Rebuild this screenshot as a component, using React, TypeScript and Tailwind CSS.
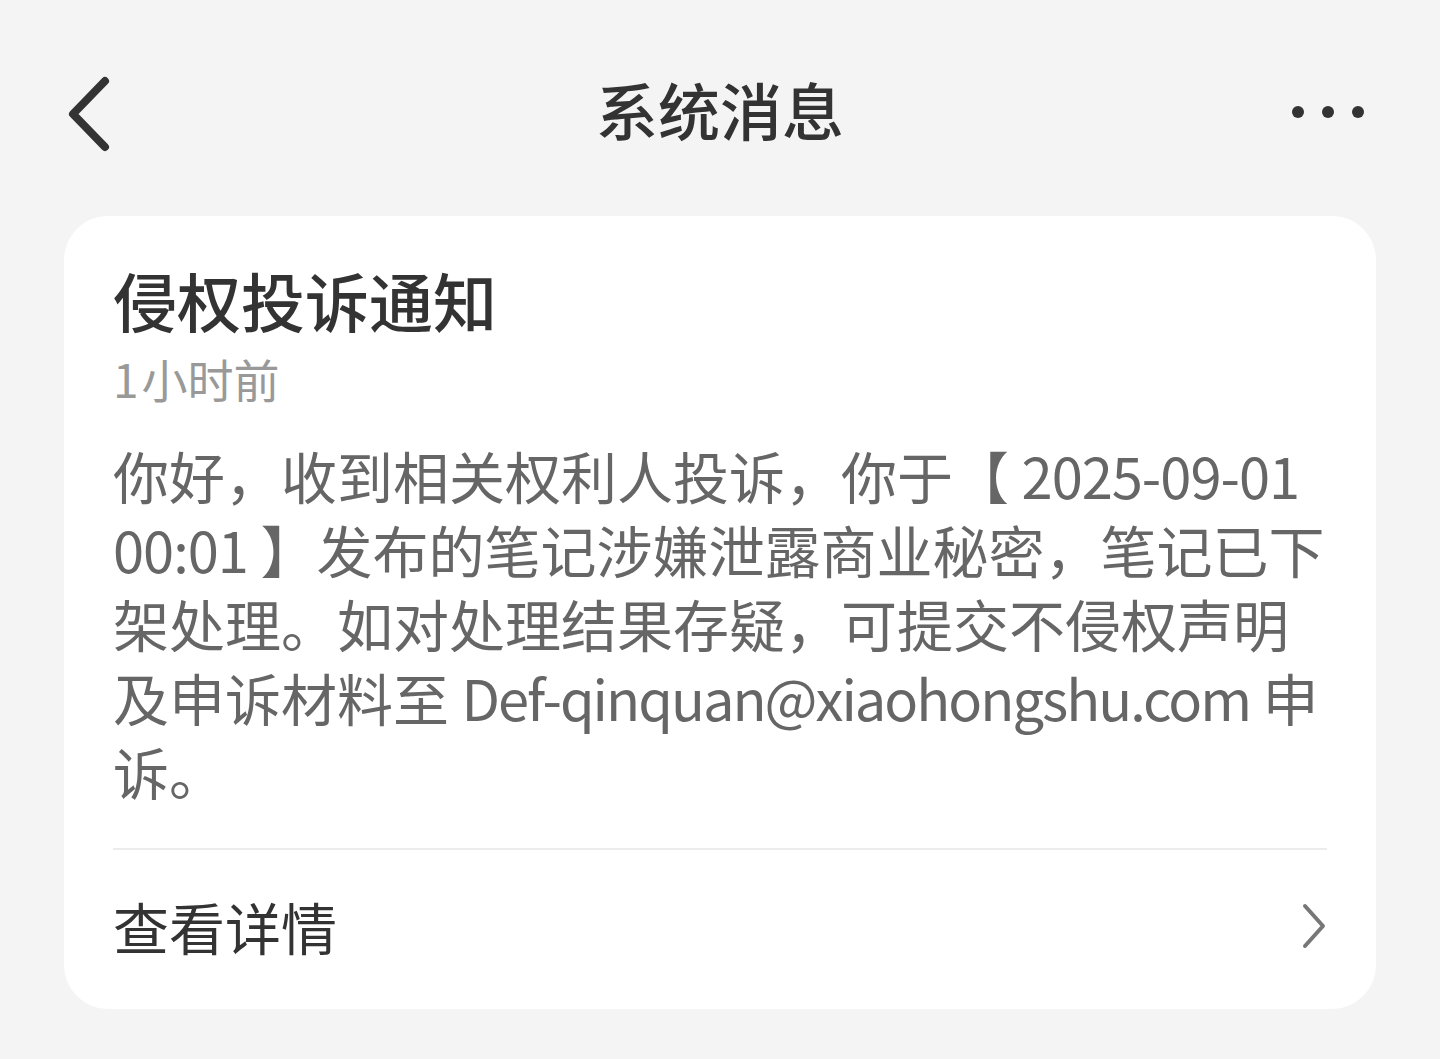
import React from "react";

const FONT = { fontFamily: '"Noto Sans CJK SC", "Noto Sans", sans-serif' };

function BackIcon() {
  return (
    <svg width="48" height="80" viewBox="0 0 48 80" fill="none">
      <path
        d="M41 9 L9 42 L41 75"
        stroke="#333333"
        strokeWidth="8"
        strokeLinecap="round"
        strokeLinejoin="round"
      />
    </svg>
  );
}

function ChevronRight() {
  return (
    <svg width="26" height="50" viewBox="0 0 26 50" fill="none">
      <path
        d="M4 5 L22 25 L4 45"
        stroke="#777777"
        strokeWidth="4"
        strokeLinecap="round"
        strokeLinejoin="round"
      />
    </svg>
  );
}

// body lines are kept as in the app's wrapping
const LINES: React.ReactNode[] = [
  <>
    你好，收到相关权利人投诉，你于【 <span className="tracking-[-1px]">2025-09-01</span>
  </>,
  <>
    <span className="tracking-[-1px]">00:01</span> 】发布的笔记涉嫌泄露商业秘密，笔记已下
  </>,
  <>架处理。如对处理结果存疑，可提交不侵权声明</>,
  <>
    及申诉材料至 <span className="tracking-[-2px]">Def-qinquan@xiaohongshu.com</span> 申
  </>,
  <>诉。</>,
];

export default function App() {
  return (
    <div className="min-h-[1059px] w-[1440px] bg-[#f4f4f4]" style={FONT}>
      {/* Header */}
      <header className="flex h-[216px] items-center px-[64px] pt-[2px]">
        <div className="mt-[6px] flex w-[100px] items-center">
          <BackIcon />
        </div>
        <h1 className="flex-1 text-center text-[62px] font-medium leading-none text-[#333333]">
          系统消息
        </h1>
        <div className="mt-[6px] flex w-[100px] items-center justify-end gap-[18px] pr-[12px]">
          <span className="h-[12px] w-[12px] rounded-full bg-[#333333]" />
          <span className="h-[12px] w-[12px] rounded-full bg-[#333333]" />
          <span className="h-[12px] w-[12px] rounded-full bg-[#333333]" />
        </div>
      </header>

      {/* Message card */}
      <div className="mx-[64px] rounded-[44px] bg-white">
        <div className="px-[49px] pt-[45px]">
          <h2 className="text-[64px] font-medium leading-[76px] text-[#333333]">
            侵权投诉通知
          </h2>
          <p className="mt-[13px] text-[46px] leading-[56px] text-[#999999]">
            <span className="mr-[3px]">1</span>小时前
          </p>
          <div className="mt-[32px] text-[56px] leading-[74px] text-[#666666]">
            {LINES.map((line, i) => (
              <p key={i} className="whitespace-nowrap">
                {line}
              </p>
            ))}
          </div>
          <div className="mt-[40px] h-[2px] bg-[#ececec]" />
        </div>
        <div className="flex h-[159px] items-center justify-between px-[49px] pb-[8px]">
          <span className="text-[56px] leading-none text-[#333333]">查看详情</span>
          <ChevronRight />
        </div>
      </div>
    </div>
  );
}
